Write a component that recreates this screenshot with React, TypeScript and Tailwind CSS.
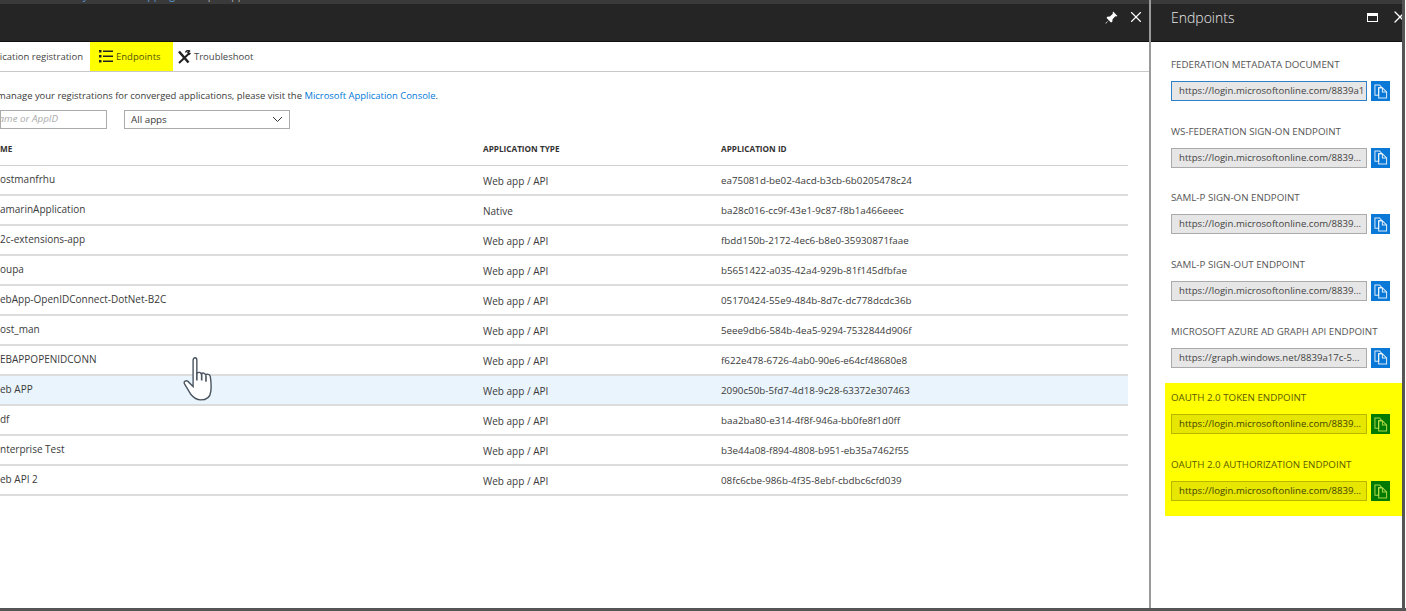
import { X } from "lucide-react";

const rows = [
  ["ostmanfrhu", "Web app / API", "ea75081d-be02-4acd-b3cb-6b0205478c24"],
  ["amarinApplication", "Native", "ba28c016-cc9f-43e1-9c87-f8b1a466eeec"],
  ["2c-extensions-app", "Web app / API", "fbdd150b-2172-4ec6-b8e0-35930871faae"],
  ["oupa", "Web app / API", "b5651422-a035-42a4-929b-81f145dfbfae"],
  ["ebApp-OpenIDConnect-DotNet-B2C", "Web app / API", "05170424-55e9-484b-8d7c-dc778dcdc36b"],
  ["ost_man", "Web app / API", "5eee9db6-584b-4ea5-9294-7532844d906f"],
  ["EBAPPOPENIDCONN", "Web app / API", "f622e478-6726-4ab0-90e6-e64cf48680e8"],
  ["eb APP", "Web app / API", "2090c50b-5fd7-4d18-9c28-63372e307463"],
  ["df", "Web app / API", "baa2ba80-e314-4f8f-946a-bb0fe8f1d0ff"],
  ["nterprise Test", "Web app / API", "b3e44a08-f894-4808-b951-eb35a7462f55"],
  ["eb API 2", "Web app / API", "08fc6cbe-986b-4f35-8ebf-cbdbc6cfd039"],
];

const CopyIcon = ({ color }: { color: string }) => (
  <svg width="14" height="15" viewBox="0 0 15 16" fill="none" stroke={color} strokeWidth="1.100" strokeOpacity="0.85">
    <path d="M1 1h5l2 2.500V4H5v8H1z" />
    <path d="M5 4h4l4.500 4.500V15H5z" />
    <path d="M9 4v4.500h4.500" />
  </svg>
);

const Endpoint = ({ label, url, active, hi }: { label: string; url: string; active?: boolean; hi?: boolean }) => (
  <div className="h-[66.7px] shrink-0">
    <div className={`h-[16px] text-[9.750px] leading-[16px] whitespace-nowrap ${hi ? "text-[#5a5a00]" : "text-[#555]"}`}>{label}</div>
    <div className="flex gap-[4px] mt-[8px]">
      <div
        className={`w-[196px] h-[20px] pl-[7px] text-[9.600px] leading-[18px] border overflow-hidden whitespace-nowrap ${
          hi
            ? "bg-[#e6e600] border-[#b8b800] text-[#444400]"
            : active
              ? "bg-[#e6e6e6] border-[#2f7fc9] text-[#444]"
              : "bg-[#e6e6e6] border-[#ababab] text-[#444]"
        }`}
      >
        {url}
      </div>
      <div className={`w-[19px] h-[20px] flex items-center justify-center ${hi ? "bg-[#007a00]" : "bg-[#0a78d7]"}`}>
        <CopyIcon color={hi ? "#c8e650" : "#ffffff"} />
      </div>
    </div>
  </div>
);

export default function App() {
  return (
    <div className="relative w-[1406px] h-[611px] overflow-hidden bg-white font-['Open_Sans',sans-serif] text-[#3a3a3a]">
      <div className="flex h-[608px] border-r-[3px] border-[#555] w-[1405px]">
        <div className="w-[1149px] shrink-0 flex flex-col">
          <div className="h-[4px] bg-[#3a3a3a] overflow-hidden shrink-0 whitespace-nowrap text-[#5b9bd5] text-[10.500px]">
            <div className="ml-[12px] -mt-[11px] leading-[12px]">
              Azure Directory - Claims Mapping <span className="text-[#aaa]">&gt; Sample app</span>
            </div>
          </div>
          <div className="h-[38px] bg-[#252525] border-b border-[#111] shrink-0 flex items-start justify-end pr-[4px] pt-[4px] gap-[9px]">
            <svg className="mt-[3px]" width="13" height="13" viewBox="0 0 24 24" fill="#fff"><path d="M15 1l8 8-2.500 1-1.500-.5L14 15l-.5 5-2.500 1-4-4-5 6H1v-1l6-5-4-4 1-2.500 5-.5 5.500-5L14 3.500z" /></svg>
            <X size={18} color="#fff" strokeWidth={1.500} />
          </div>
          <div className="h-[30px] border-b border-[#c8c8c8] shrink-0 flex text-[9.500px] text-[#444]">
            <div className="w-[90px] shrink-0 overflow-hidden flex justify-end items-center whitespace-nowrap pr-[7px] pt-[2px]">Application registration</div>
            <div className="w-[83px] shrink-0 bg-[#ffff00] flex items-center gap-[3px] pl-[9px] pb-[1px]">
              <svg width="14" height="14" viewBox="0 0 14 14" fill="#222">
                <rect x="0" y="1" width="2.500" height="2.500" />
                <rect x="0" y="6" width="2.500" height="2.500" />
                <rect x="0" y="11" width="2.500" height="2.500" />
                <rect x="4" y="1.500" width="10" height="1.500" />
                <rect x="4" y="6.500" width="10" height="1.500" />
                <rect x="4" y="11.500" width="10" height="1.500" />
              </svg>
              <span className="text-[#55550a] mt-[2px]">Endpoints</span>
            </div>
            <div className="flex items-center gap-[3px] pl-[4px]">
              <svg width="14" height="14" viewBox="0 0 14 14" stroke="#222" fill="none">
                <path d="M2 1.500l9.500 11" strokeWidth="2.500" />
                <path d="M12.500 3L2 13" strokeWidth="2" />
                <path d="M8.500 2.500c1-2 3-2.500 4-1.500L11 2.500l1.500 1.500 1-1" strokeWidth="1.500" />
              </svg>
              <span className="mt-[2px]">Troubleshoot</span>
            </div>
          </div>
          <div className="h-[21px] mt-[17px] shrink-0 text-[9.450px] whitespace-nowrap -ml-[3px]">
            manage your registrations for converged applications, please visit the <span className="text-[#0078d7]">Microsoft Application Console</span>.
          </div>
          <div className="flex gap-[17px] shrink-0 text-[9.800px]">
            <div className="w-[107px] h-[19px] border border-[#ababab] overflow-hidden flex justify-end pr-[48px] items-center whitespace-nowrap italic text-[#aaa]">
              ame or AppID
            </div>
            <div className="w-[166px] h-[19px] border border-[#ababab] flex justify-between items-center pl-[6px] pr-[6px]">
              <span className="mt-[1px]">All apps</span>
              <svg width="11" height="7" viewBox="0 0 11 7" fill="none" stroke="#333"><path d="M1 1l4.500 4.500L10 1" /></svg>
            </div>
          </div>
          <div className="w-[1128px] mt-[10px] shrink-0">
            <div className="h-[27px] border-b border-[#d0d0d0] flex items-start text-[8.200px] font-bold text-[#333] leading-[20px]">
              <div className="w-[483px]">ME</div>
              <div className="w-[238px]">APPLICATION TYPE</div>
              <div>APPLICATION ID</div>
            </div>
            {rows.map((r, i) => (
              <div key={r[2]} className={`h-[30px] pt-[2px] border-b-2 border-[#dcdcdc] flex items-center text-[9.800px] ${i === 7 ? "bg-[#eaf4fc]" : ""}`}>
                <div className="w-[483px] -mt-[3px] text-[10px]">{r[0]}</div>
                <div className="w-[238px] text-[10px]">{r[1]}</div>
                <div>{r[2]}</div>
              </div>
            ))}
          </div>
        </div>
        <div className="w-[2px] shrink-0 bg-[#9a9a9a]" />
        <div className="flex-1 min-w-0 flex flex-col overflow-hidden">
          <div className="h-[4px] bg-[#3a3a3a] shrink-0" />
          <div className="h-[38px] bg-[#252525] border-b border-[#111] shrink-0 flex items-start justify-between pl-[20px] -mr-[8px]">
            <span className="text-[#e8e8e8] text-[14px] leading-[27px] font-light">Endpoints</span>
            <div className="flex items-start gap-[12px] pt-[3px]">
              <div className="w-[11px] h-[9px] mt-[6px] border border-white border-t-[3px]" />
              <X size={20} color="#fff" strokeWidth={1.500} />
            </div>
          </div>
          <div className="pl-[20px] pt-[15px] relative flex flex-col">
            <Endpoint label="FEDERATION METADATA DOCUMENT" url="https://login.microsoftonline.com/8839a1" active />
            <Endpoint label="WS-FEDERATION SIGN-ON ENDPOINT" url="https://login.microsoftonline.com/8839..." />
            <Endpoint label="SAML-P SIGN-ON ENDPOINT" url="https://login.microsoftonline.com/8839..." />
            <Endpoint label="SAML-P SIGN-OUT ENDPOINT" url="https://login.microsoftonline.com/8839..." />
            <Endpoint label="MICROSOFT AZURE AD GRAPH API ENDPOINT" url="https://graph.windows.net/8839a17c-5..." />
            <div className="-ml-[6px] pl-[6px] bg-[#ffff00] h-[133px] -mt-[7px] pt-[7px]">
              <Endpoint hi label="OAUTH 2.0 TOKEN ENDPOINT" url="https://login.microsoftonline.com/8839..." />
              <Endpoint hi label="OAUTH 2.0 AUTHORIZATION ENDPOINT" url="https://login.microsoftonline.com/8839..." />
            </div>
          </div>
        </div>
      </div>
      <div className="h-[3px] bg-[#555]" />
      <svg className="absolute left-[183px] top-[357px]" width="32" height="44" viewBox="0 0 29 41" fill="#fff" stroke="#4a5560" strokeWidth="1.300">
        <path d="M9 3c0-3 3.500-3 3.500 0v12c2-1 3.500-.5 4 .5 1.500-1 3.500-.5 4 1 1.500-.8 4-.5 4.500 1.500 1 6 1 10 .5 14-.5 5-4 8-9.500 8-4 0-6.500-2-9-5L1 25c-1-2 1-3.500 3-2.500l5 5z" />
        <path d="M12.500 14v8M17 15v7M21 17v6" strokeWidth="1.500" />
      </svg>
    </div>
  );
}
